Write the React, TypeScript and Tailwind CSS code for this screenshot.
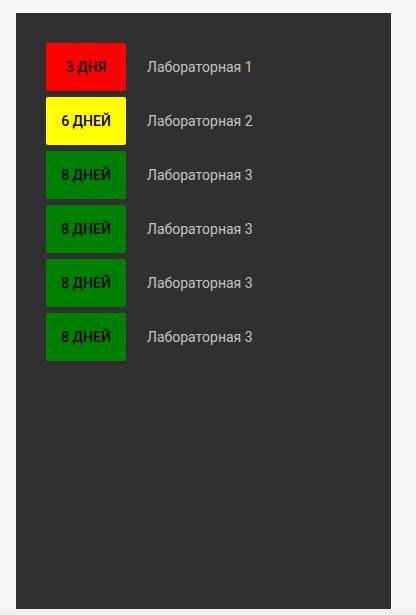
const items = [
  { days: "3 ДНЯ", name: "Лабораторная 1", color: "bg-[#ff0000]" },
  { days: "6 ДНЕЙ", name: "Лабораторная 2", color: "bg-[#ffff00]" },
  { days: "8 ДНЕЙ", name: "Лабораторная 3", color: "bg-[#008000]" },
  { days: "8 ДНЕЙ", name: "Лабораторная 3", color: "bg-[#008000]" },
  { days: "8 ДНЕЙ", name: "Лабораторная 3", color: "bg-[#008000]" },
  { days: "8 ДНЕЙ", name: "Лабораторная 3", color: "bg-[#008000]" }
];

export default function App() {
  return (
    <div className="flex h-[615px] w-[416px] flex-col bg-[#f8f8f8] font-['Roboto',sans-serif]">
      <div className="flex flex-1 pt-[13px] pl-4 pr-[25px]">
        <div className="flex-1 bg-[#303030] pt-[30px] pl-[30px]">
          <div className="flex flex-col gap-[6px]">
            {items.map((item, i) => (
              <div key={i} className="flex items-center">
                <div
                  className={`flex h-[48px] w-[80px] items-center justify-center rounded-[2px] text-[14px] font-medium text-black ${item.color}`}
                >
                  {item.days}
                </div>
                <span className="ml-[21px] text-[14px] text-[#c4c4c4]">{item.name}</span>
              </div>
            ))}
          </div>
        </div>
      </div>
      <div className="h-[6px] bg-[#f0f0f0]" />
    </div>
  );
}
